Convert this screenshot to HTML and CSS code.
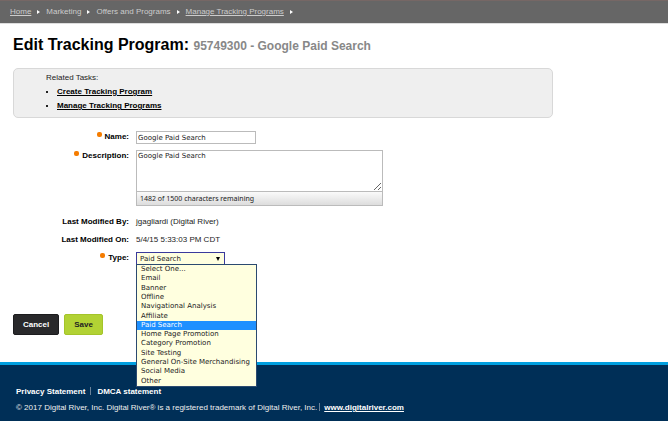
FILE: index.html
```html
<!DOCTYPE html>
<html lang="en">
<head>
<meta charset="utf-8">
<title>Edit Tracking Program</title>
<link rel="stylesheet" href="styles.css">
</head>
<body>
<nav class="crumbs" aria-label="Breadcrumb">
  <a href="#">Home</a>
  <span>Marketing</span>
  <span>Offers and Programs</span>
  <a href="#">Manage Tracking Programs</a>
</nav>
<main class="page">
  <h1>Edit Tracking Program: <small>95749300 - Google Paid Search</small></h1>
  <section class="related">
    <p>Related Tasks:</p>
    <ul>
      <li><a href="#">Create Tracking Program</a></li>
      <li><a href="#">Manage Tracking Programs</a></li>
    </ul>
  </section>
  <form class="form">
    <label class="label required" for="name">Name:</label>
    <input class="text" id="name" type="text" value="Google Paid Search">
    <label class="label required" for="description">Description:</label>
    <div class="counted">
      <textarea id="description">Google Paid Search</textarea>
      <div class="count">1482 of 1500 characters remaining</div>
    </div>
    <span class="label">Last Modified By:</span>
    <span class="value">jgagliardi (Digital River)</span>
    <span class="label">Last Modified On:</span>
    <span class="value">5/4/15 5:33:03 PM CDT</span>
    <label class="label required" for="type">Type:</label>
    <div class="picker">
      <select id="type"><option>Paid Search</option></select>
      <ul class="options" role="listbox" aria-label="Type">
        <li role="option">Select One...</li>
        <li role="option">Email</li>
        <li role="option">Banner</li>
        <li role="option">Offline</li>
        <li role="option">Navigational Analysis</li>
        <li role="option">Affiliate</li>
        <li role="option" aria-selected="true">Paid Search</li>
        <li role="option">Home Page Promotion</li>
        <li role="option">Category Promotion</li>
        <li role="option">Site Testing</li>
        <li role="option">General On-Site Merchandising</li>
        <li role="option">Social Media</li>
        <li role="option">Other</li>
      </ul>
    </div>
    <div class="actions">
      <button class="btn dark" type="button">Cancel</button>
      <button class="btn green" type="submit">Save</button>
    </div>
  </form>
</main>
<footer class="footer">
  <p><a href="#">Privacy Statement</a><i class="bar"></i><a href="#">DMCA statement</a></p>
  <p>© 2017 Digital River, Inc. Digital River® is a registered trademark of Digital River, Inc.<i class="bar tight"></i><a class="site" href="#">www.digitalriver.com</a></p>
</footer>
</body>
</html>
```
FILE: styles.css
```css
* {
  box-sizing: border-box;
}

body {
  display: flex;
  flex-direction: column;
  min-height: 100vh;
  margin: 0;
  background: #fff;
  color: #222;
  font: 8px/12px "Liberation Sans", Arial, sans-serif;
}

p,
ul {
  margin: 0;
  padding: 0;
}

.crumbs {
  display: flex;
  align-items: center;
  height: 24px;
  padding: 0 10px;
  border-top: 1px solid #766765;
  border-bottom: 1px solid #ddd;
  background: #666;
  color: #ccc;
}

.crumbs a {
  color: #ccc;
}

.crumbs > *::after {
  content: "";
  display: inline-block;
  margin: 0 6px;
  border: solid transparent;
  border-width: 2px 0 2px 3px;
  border-left-color: #fff;
}

.page {
  flex: 1;
  padding: 11px 13px 0;
}

h1 {
  margin: 0 0 12px;
  color: #000;
  font-size: 16px;
  line-height: 20px;
}

h1 small {
  color: #888;
  font-size: 12px;
}

.related {
  max-width: 540px;
  height: 50px;
  padding: 2px 32px;
  border: 1px solid #d8d8d8;
  border-radius: 5px;
  background: #efefef;
  line-height: 14px;
}

.related ul {
  padding-left: 11px;
  list-style: square;
}

.related a {
  color: #000;
  font-weight: bold;
}

.form {
  display: grid;
  grid-template-columns: 116px 1fr;
  gap: 6px 7px;
  margin-top: 13px;
}

.label {
  color: #000;
  font-weight: bold;
  text-align: right;
}

.required::before {
  content: "";
  display: inline-block;
  width: 5px;
  height: 5px;
  margin-right: 3px;
  border-radius: 2px;
  background: #f57c00;
  vertical-align: 2px;
}

.text,
textarea,
select {
  display: block;
  margin: 0;
  border: 1px solid #bbb;
  border-radius: 0;
  background: #fff;
  color: #222;
  font: 7px/10px "DejaVu Sans", Verdana, sans-serif;
}

.text {
  width: 120px;
  height: 13px;
  padding: 0 1px;
}

.counted {
  width: 247px;
  margin-bottom: 4px;
}

textarea {
  width: 100%;
  height: 42px;
  padding: 0 1px;
  resize: vertical;
}

.count {
  height: 14px;
  padding-left: 3px;
  border: 1px solid #bbb;
  border-top: 0;
  background: linear-gradient(#fafafa, #ddd);
  font: 7px/13px "Noto Sans", Verdana, sans-serif;
}

.picker {
  position: relative;
}

select {
  width: 89px;
  height: 13px;
  padding: 0 3px;
  border-color: #3a3a9c;
  appearance: none;
  background: #ffffdf;
}

.picker::before {
  content: "";
  position: absolute;
  top: 5px;
  left: 80px;
  border: solid transparent;
  border-width: 4px 2px 0;
  border-top-color: #000;
}

.options {
  position: absolute;
  top: 12px;
  left: 0;
  display: grid;
  grid-template-rows: repeat(13, 1fr);
  height: 123px;
  width: 121px;
  border: 1px solid #2b4a70;
  background: #ffffdf;
  font: 7px/9px "DejaVu Sans", Verdana, sans-serif;
  list-style: none;
  white-space: nowrap;
}

.options li {
  padding-left: 4px;
}

.options [aria-selected] {
  background: #1e90ff;
  color: #fff;
}

.actions {
  grid-column: 1 / -1;
  display: flex;
  gap: 5px;
  margin: 43px 0 26px;
}

.btn {
  height: 21px;
  padding: 0 9px;
  border: 1px solid #1c1c1e;
  border-radius: 2px;
  font: bold 8px/12px "Liberation Sans", Arial, sans-serif;
}

.dark {
  background: #29292b;
  color: #fff;
}

.green {
  border-color: #a4c42a;
  background: #b2d234;
  color: #222;
}

.footer {
  height: 59px;
  padding: 21px 16px 0;
  border-top: 3px solid #009fdf;
  background: #002f57;
  color: #eee;
}

.footer p + p {
  margin-top: 4px;
}

.footer a {
  color: #fff;
  font-weight: bold;
  text-decoration: none;
}

.footer .site {
  text-decoration: underline;
}

.bar {
  display: inline-block;
  height: 8px;
  margin: 0 6px 0 5px;
  border-left: 1px solid #6b8299;
  vertical-align: -1px;
}

.tight {
  margin: 0 4px 0 2px;
}
```
